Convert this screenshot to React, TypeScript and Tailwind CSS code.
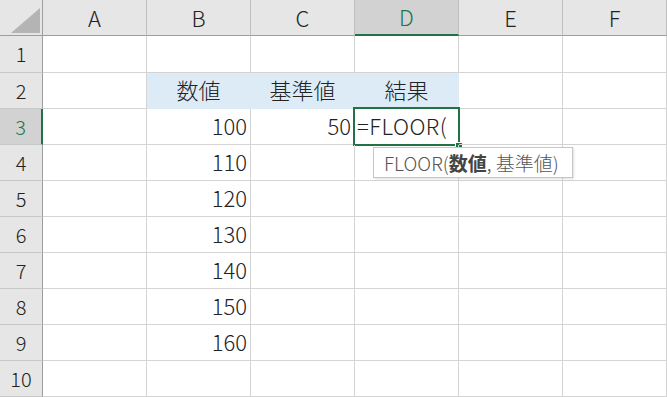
import React from "react";

const cols = ["A", "B", "C", "D", "E", "F"];
const font = { fontFamily: '"Noto Sans CJK JP", "Noto Sans", sans-serif' };

type CellDef = { text?: string; align?: "left" | "right" | "center"; fill?: boolean };

const data: Record<string, CellDef> = {
  B2: { text: "数値", align: "center", fill: true },
  C2: { text: "基準値", align: "center", fill: true },
  D2: { text: "結果", align: "center", fill: true },
  B3: { text: "100", align: "right" },
  C3: { text: "50", align: "right" },
  B4: { text: "110", align: "right" },
  B5: { text: "120", align: "right" },
  B6: { text: "130", align: "right" },
  B7: { text: "140", align: "right" },
  B8: { text: "150", align: "right" },
  B9: { text: "160", align: "right" },
};

export default function App() {
  const rows = Array.from({ length: 10 }, (_, i) => i + 1);
  return (
    <div
      className="w-[667px] h-[397px] overflow-hidden bg-white text-[#222] font-light"
      style={font}
    >
      <div className="grid grid-cols-[43px_repeat(6,104px)] grid-rows-[36px_37px_repeat(9,36px)]">
        {/* corner */}
        <div className="bg-[#e6e6e6] border-r border-b border-[#9e9e9e] relative">
          <svg width="42" height="35" className="absolute left-0 top-0">
            <polygon points="11,33 40,33 40,8" fill="#b4b4b4" />
          </svg>
        </div>
        {cols.map((c) => (
          <div
            key={c}
            className={
              c === "D"
                ? "bg-[#d2d2d2] border-r border-[#bfbfbf] border-b-2 border-b-[#217346] text-[#217346] flex items-center justify-center text-[22px] pb-[1px]"
                : "bg-[#e6e6e6] border-r border-[#bfbfbf] border-b border-b-[#9e9e9e] flex items-center justify-center text-[22px]"
            }
          >
            {c}
          </div>
        ))}
        {rows.map((r) => (
          <React.Fragment key={r}>
            <div
              className={
                r === 3
                  ? "bg-[#d2d2d2] border-b border-[#c8c8c8] border-r-2 border-r-[#217346] text-[#217346] flex items-center justify-center text-[20px]"
                  : "bg-[#e6e6e6] border-b border-[#c8c8c8] border-r border-r-[#9e9e9e] flex items-center justify-center text-[20px]"
              }
            >
              {r}
            </div>
            {cols.map((c) => {
              const key = `${c}${r}`;
              const d = data[key];
              const isSel = key === "D3";
              return (
                <div
                  key={key}
                  className={
                    "relative border-r border-b border-[#d4d4d4] flex items-center text-[22px] leading-none pb-[3px] " +
                    (d?.fill ? "bg-[#ddebf7] border-[#ddebf7] " : "") +
                    (d?.align === "right"
                      ? "justify-end pr-[3px] "
                      : d?.align === "center"
                      ? "justify-center "
                      : "justify-start pl-[1px] ")
                  }
                >
                  {d?.text}
                  {isSel && (
                    <>
                      <span className="pl-[1px] tracking-[0.5px]">=FLOOR(</span>
                      <div className="absolute left-[-2px] top-[-2px] right-[-2px] bottom-[-2px] border-2 border-[#217346] pointer-events-none" />
                      <div className="absolute right-[-4px] bottom-[-4px] w-[7px] h-[6px] bg-[#217346] border-l border-t border-white" />
                      <div className="absolute left-[18px] top-[38px] w-[200px] h-[31px] bg-white border border-[#c6c6c6] shadow-[1px_1px_2px_rgba(0,0,0,0.12)] flex items-center pl-[10px] text-[19px] text-[#555] whitespace-nowrap z-10 font-light">
                        FLOOR(<span className="font-bold text-[#444]">数値</span>, 基準値)
                      </div>
                    </>
                  )}
                </div>
              );
            })}
          </React.Fragment>
        ))}
      </div>
    </div>
  );
}
